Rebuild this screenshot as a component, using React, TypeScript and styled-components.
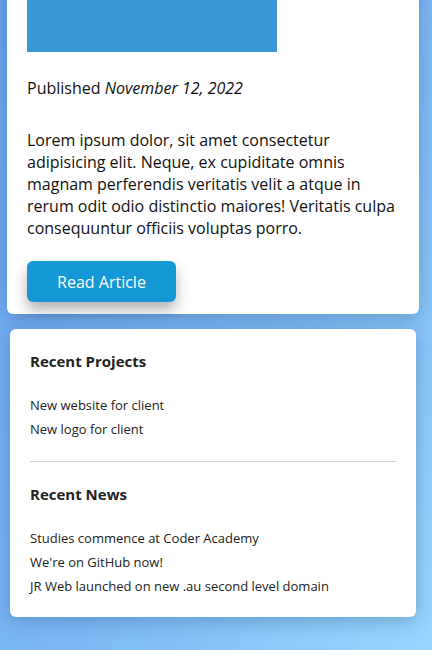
import React from "react";
import styled, { createGlobalStyle } from "styled-components";

const GlobalStyle = createGlobalStyle`
  html, body {
    margin: 0;
    padding: 0;
    height: 100%;
  }
  body {
    font-family: "Open Sans", "Liberation Sans", sans-serif;
    background: linear-gradient(120deg, #6aa3ee 0%, #7db8f4 55%, #98d6fc 100%);
    background-attachment: fixed;
    overflow: hidden;
  }
`;

const Page = styled.main`
  display: flex;
  flex-direction: column;
  gap: 15px;
  padding: 0 13px 0 7px;
  margin-top: -148px;
`;

const Card = styled.article`
  background: #fff;
  border-radius: 6px;
  box-shadow: 0 4px 18px rgba(20, 50, 100, 0.28);
  padding: 20px 20px 12px;
  color: #111;
`;

const Hero = styled.div`
  width: 250px;
  height: 180px;
  background: #3897d6;
`;

const Meta = styled.p`
  margin: 25px 0 0;
  font-size: 16px;
  line-height: 22px;
`;

const Body = styled.p`
  margin: 30px 0 0;
  font-size: 16px;
  line-height: 22px;
`;

const Button = styled.button`
  margin-top: 22px;
  width: 149px;
  height: 41px;
  border: none;
  border-radius: 6px;
  background: #1498d5;
  color: #fff;
  font-family: inherit;
  font-size: 16px;
  box-shadow: 0 8px 14px rgba(0, 0, 0, 0.3);
  cursor: pointer;
`;

const Sidebar = styled.aside`
  margin: 0 3px;
  background: #fff;
  border-radius: 6px;
  box-shadow: 0 4px 18px rgba(20, 50, 100, 0.28);
  padding: 22px 20px 19px;
  color: #222;
`;

const Heading = styled.h3`
  margin: 0 0 22px;
  font-size: 15px;
  line-height: 20px;
  font-weight: 700;
`;

const List = styled.ul`
  list-style: none;
  margin: 0;
  padding: 0;
`;

const Item = styled.li`
  font-size: 13px;
  line-height: 24px;
`;

const Divider = styled.hr`
  border: none;
  border-top: 1px solid #cfcfcf;
  margin: 20px 0 22px;
`;

export default function App() {
  return (
    <>
      <GlobalStyle />
      <Page>
        <Card>
          <Hero />
          <Meta>
            Published <em>November 12, 2022</em>
          </Meta>
          <Body>
            Lorem ipsum dolor, sit amet consectetur adipisicing elit. Neque, ex
            cupiditate omnis magnam perferendis veritatis velit a atque in rerum
            odit odio distinctio maiores! Veritatis culpa consequuntur officiis
            voluptas porro.
          </Body>
          <Button>Read Article</Button>
        </Card>
        <Sidebar>
          <Heading>Recent Projects</Heading>
          <List>
            <Item>New website for client</Item>
            <Item>New logo for client</Item>
          </List>
          <Divider />
          <Heading>Recent News</Heading>
          <List>
            <Item>Studies commence at Coder Academy</Item>
            <Item>We're on GitHub now!</Item>
            <Item>JR Web launched on new .au second level domain</Item>
          </List>
        </Sidebar>
      </Page>
    </>
  );
}
